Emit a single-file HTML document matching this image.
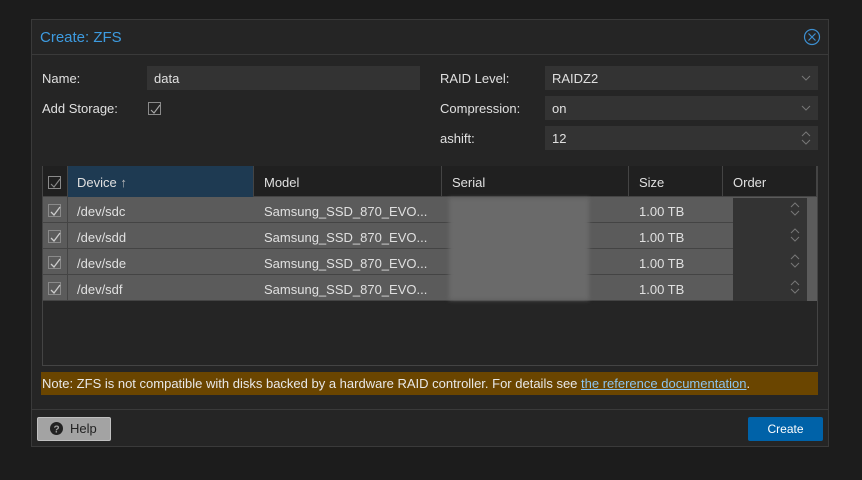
<!DOCTYPE html>
<html><head><style>
*{box-sizing:border-box;margin:0;padding:0}
body{width:862px;height:480px;background:#1c1c1c;font-family:"Liberation Sans",sans-serif;font-size:13px;color:#e0e0e0;position:relative;overflow:hidden}
.a{position:absolute}
.dlg{left:31px;top:19px;width:798px;height:428px;background:#252525;border:1px solid #3a3a3a}
.in{background:#333;height:24px;line-height:25px;padding-left:7px}
.lbl{line-height:25px}
.cb{width:13px;height:13px;border:1px solid #8a8a8a}
.cb svg{position:absolute;left:1px;top:1px}
.hd{top:166px;height:31px;line-height:31px;background:#202020;border-bottom:1px solid #444}
.row{height:26px;line-height:26px;background:#5b5b5b;border-bottom:1px solid #444}
</style></head><body>
<div class="a dlg"></div>
<div class="a" style="left:32px;top:20px;width:796px;height:35px;border-bottom:1px solid #3a3a3a"></div>
<div class="a" style="left:40px;top:29px;font-size:15px;color:#3d9be0">Create: ZFS</div>
<svg class="a" style="left:803px;top:28px" width="18" height="18"><circle cx="9" cy="9" r="7.5" fill="none" stroke="#3d8fd0" stroke-width="1.2"/><path d="M5.5 5.5L12.5 12.5M12.5 5.5L5.5 12.5" stroke="#3d8fd0" stroke-width="1.2"/></svg>

<div class="a lbl" style="left:42px;top:66px">Name:</div>
<div class="a in" style="left:147px;top:66px;width:273px">data</div>
<div class="a lbl" style="left:42px;top:96px">Add Storage:</div>
<div class="a cb" style="left:148px;top:102px"><svg width="11" height="11"><path d="M1 6L4 9L10 1" fill="none" stroke="#aaa" stroke-width="1.1"/></svg></div>

<div class="a lbl" style="left:440px;top:66px">RAID Level:</div>
<div class="a in" style="left:545px;top:66px;width:273px">RAIDZ2</div>
<div class="a lbl" style="left:440px;top:96px">Compression:</div>
<div class="a in" style="left:545px;top:96px;width:273px">on</div>
<div class="a lbl" style="left:440px;top:126px">ashift:</div>
<div class="a in" style="left:545px;top:126px;width:273px">12</div>
<svg class="a" style="left:800px;top:73px" width="12" height="10"><path d="M2 3L6 7L10 3" fill="none" stroke="#777"/></svg>
<svg class="a" style="left:800px;top:103px" width="12" height="10"><path d="M2 3L6 7L10 3" fill="none" stroke="#777"/></svg>
<svg class="a" style="left:800px;top:130px" width="12" height="16"><path d="M2 6L6 2L10 6M2 10L6 14L10 10" fill="none" stroke="#777"/></svg>

<div class="a" style="left:42px;top:166px;width:776px;height:200px;border:1px solid #444;background:#252525"></div>
<div class="a hd" style="left:43px;width:774px"></div>
<div class="a" style="left:67px;top:166px;width:186px;height:31px;background:#1e3a52"></div>
<div class="a cb" style="left:48px;top:176px"><svg width="11" height="11"><path d="M1 6L4 9L10 1" fill="none" stroke="#888" stroke-width="1.1"/></svg></div>
<div class="a" style="left:67px;top:166px;width:1px;height:31px;background:#444"></div>
<div class="a" style="left:253px;top:166px;width:1px;height:31px;background:#444"></div>
<div class="a" style="left:441px;top:166px;width:1px;height:31px;background:#444"></div>
<div class="a" style="left:628px;top:166px;width:1px;height:31px;background:#444"></div>
<div class="a" style="left:722px;top:166px;width:1px;height:31px;background:#444"></div>
<div class="a" style="left:816px;top:166px;width:1px;height:31px;background:#444"></div>
<div class="a" style="left:77px;top:175px">Device <span style="color:#bbb">↑</span></div>
<div class="a" style="left:264px;top:175px">Model</div>
<div class="a" style="left:452px;top:175px">Serial</div>
<div class="a" style="left:639px;top:175px">Size</div>
<div class="a" style="left:733px;top:175px">Order</div>

<div class="a" style="left:43px;top:197px;width:764px">
<div class="row"></div><div class="row"></div><div class="row"></div><div class="row"></div>
</div>
<div class="a" style="left:807px;top:197px;width:10px;height:104px;background:#5b5b5b"></div>
<div class="a" style="left:67px;top:197px;width:1px;height:104px;background:#444"></div>
<div class="a" style="left:449px;top:198px;width:140px;height:102px;background:#6a6a6a;filter:blur(2px)"></div>
<div class="a" style="left:733px;top:198px;width:74px;height:103px;background:#333"></div>

<div class="a cb" style="left:48px;top:204px"><svg width="11" height="11"><path d="M1 6L4 9L10 1" fill="none" stroke="#ccc" stroke-width="1.3"/></svg></div>
<div class="a cb" style="left:48px;top:230px"><svg width="11" height="11"><path d="M1 6L4 9L10 1" fill="none" stroke="#ccc" stroke-width="1.3"/></svg></div>
<div class="a cb" style="left:48px;top:256px"><svg width="11" height="11"><path d="M1 6L4 9L10 1" fill="none" stroke="#ccc" stroke-width="1.3"/></svg></div>
<div class="a cb" style="left:48px;top:282px"><svg width="11" height="11"><path d="M1 6L4 9L10 1" fill="none" stroke="#ccc" stroke-width="1.3"/></svg></div>

<div class="a" style="left:77px;top:204px">/dev/sdc</div>
<div class="a" style="left:77px;top:230px">/dev/sdd</div>
<div class="a" style="left:77px;top:256px">/dev/sde</div>
<div class="a" style="left:77px;top:282px">/dev/sdf</div>
<div class="a" style="left:264px;top:204px">Samsung_SSD_870_EVO...</div>
<div class="a" style="left:264px;top:230px">Samsung_SSD_870_EVO...</div>
<div class="a" style="left:264px;top:256px">Samsung_SSD_870_EVO...</div>
<div class="a" style="left:264px;top:282px">Samsung_SSD_870_EVO...</div>
<div class="a" style="left:639px;top:204px">1.00 TB</div>
<div class="a" style="left:639px;top:230px">1.00 TB</div>
<div class="a" style="left:639px;top:256px">1.00 TB</div>
<div class="a" style="left:639px;top:282px">1.00 TB</div>
<svg class="a" style="left:789px;top:201px" width="12" height="100"><g fill="none" stroke="#777"><path d="M2 6L6 2L10 6M2 10L6 14L10 10"/><path d="M2 32L6 28L10 32M2 36L6 40L10 36"/><path d="M2 58L6 54L10 58M2 62L6 66L10 62"/><path d="M2 84L6 80L10 84M2 88L6 92L10 88"/></g></svg>

<div class="a" style="left:41px;top:372px;width:777px;height:23px;background:#6a4500;line-height:24px;padding-left:1px;color:#e8e8e8">Note: ZFS is not compatible with disks backed by a hardware RAID controller. For details see <span style="color:#8cc4ee;text-decoration:underline">the reference documentation</span>.</div>
<div class="a" style="left:32px;top:409px;width:796px;height:1px;background:#3a3a3a"></div>

<div class="a" style="left:37px;top:417px;width:74px;height:24px;background:#a3a3a3;border:1px solid #c0c0c0;border-radius:2px;color:#222;line-height:22px;padding-left:32px">Help</div>
<svg class="a" style="left:50px;top:422px" width="13" height="13"><circle cx="6.5" cy="6.5" r="6.5" fill="#222"/><text x="6.5" y="10.5" font-size="10" font-weight="bold" fill="#a3a3a3" text-anchor="middle" font-family="Liberation Sans">?</text></svg>
<div class="a" style="left:748px;top:417px;width:75px;height:24px;background:#0062a8;border-radius:2px;color:#fff;line-height:24px;text-align:center;font-size:12px">Create</div>
</body></html>
